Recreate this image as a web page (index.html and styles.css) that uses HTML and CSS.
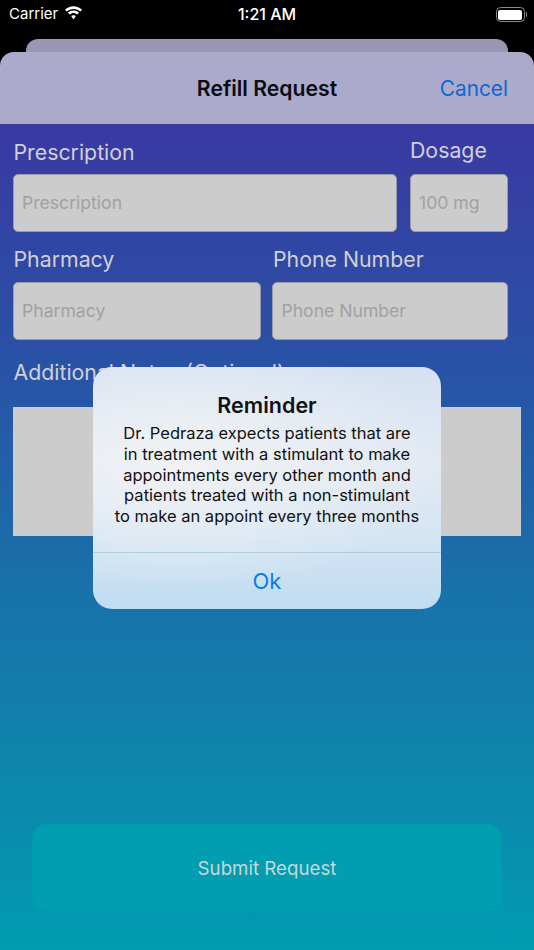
FILE: index.html
```html
<!DOCTYPE html>
<html lang="en">
<head>
<meta charset="utf-8">
<title>Refill Request</title>
<link rel="stylesheet" href="styles.css">
</head>
<body>
<div class="phone">
  <div class="status">
    <div class="status-left">
      <span>Carrier</span>
      <svg class="wifi" width="19" height="14" viewBox="0 0 19 14"><path d="M9.500 2.900c2.600 0 5 1 6.800 2.700l1.700-1.800C15.700 1.600 12.700.3 9.500.3S3.300 1.600 1 3.800l1.700 1.800c1.800-1.700 4.200-2.700 6.800-2.700z" fill="#fff"/><path d="M9.500 6.900c1.500 0 2.800.6 3.900 1.500l1.700-1.800c-1.500-1.400-3.500-2.200-5.600-2.200s-4.100.8-5.600 2.200l1.700 1.800c1.100-.9 2.400-1.500 3.900-1.500z" fill="#fff"/><path d="M9.500 9.200c-.9 0-1.700.3-2.300.9l2.300 3.500 2.300-3.500c-.6-.6-1.400-.9-2.300-.9z" fill="#fff"/></svg>
    </div>
    <div class="status-time">1:21 AM</div>
    <div class="status-right">
      <div class="battery"><div class="battery-fill"></div></div>
      <div class="battery-cap"></div>
    </div>
  </div>
  <div class="peek"></div>
  <div class="sheet">
    <header class="nav">
      <div class="nav-title">Refill Request</div>
      <div class="nav-cancel">Cancel</div>
    </header>
    <main class="form">
      <div class="row row-top">
        <div class="col col-wide">
          <div class="label label-low">Prescription</div>
          <div class="field">Prescription</div>
        </div>
        <div class="col col-dose">
          <div class="label label-high">Dosage</div>
          <div class="field">100 mg</div>
        </div>
      </div>
      <div class="row row-second">
        <div class="col col-pharm">
          <div class="label">Pharmacy</div>
          <div class="field">Pharmacy</div>
        </div>
        <div class="col col-phone">
          <div class="label">Phone Number</div>
          <div class="field">Phone Number</div>
        </div>
      </div>
      <div class="label label-notes">Additional Notes (Optional)</div>
      <div class="notes"></div>
      <div class="submit">Submit Request</div>
    </main>
  </div>
  <div class="alert">
    <div class="alert-body">
      <div class="alert-title">Reminder</div>
      <p class="alert-text">Dr. Pedraza expects patients that are<br>in treatment with a stimulant to make<br>appointments every other month and<br>patients treated with a non-stimulant<br>to make an appoint every three months</p>
    </div>
    <div class="alert-action">Ok</div>
  </div>
</div>
</body>
</html>
```

FILE: styles.css
```css
* { box-sizing: border-box; }
html, body { margin: 0; padding: 0; }
body { background: #000; font-family: Inter, "Liberation Sans", sans-serif; }
.phone { position: relative; width: 534px; height: 950px; display: flex; flex-direction: column; overflow: hidden; background: #000; }

.status { height: 39px; flex: none; position: relative; display: flex; justify-content: space-between; color: #fff; font-size: 15px; padding: 5px 7px 0 9px; }
.status-left { display: flex; align-items: flex-start; gap: 6px; line-height: 18px; }
.wifi { margin-top: 1px; }
.status-time { position: absolute; left: 0; right: 0; top: 5px; text-align: center; line-height: 18px; font-size: 16px; font-weight: 500; }
.status-right { display: flex; align-items: flex-start; gap: 1px; padding-top: 2px; }
.battery { width: 29px; height: 15px; border: 1.5px solid #8a8a8a; border-radius: 4.5px; padding: 1.5px; }
.battery-fill { height: 100%; background: #fff; border-radius: 2px; }
.battery-cap { width: 1.5px; height: 5px; margin-top: 5px; background: #8a8a8a; border-radius: 0 1px 1px 0; }

.peek { flex: none; height: 13px; margin: 0 26px; background: #9a97b5; border-radius: 12px 12px 0 0; }
.sheet { flex: 1; display: flex; flex-direction: column; border-radius: 14px 14px 0 0; overflow: hidden; }

.nav { height: 72px; flex: none; background: #abaaca; position: relative; display: flex; align-items: center; justify-content: flex-end; padding: 0 26px 0 0; }
.nav-title { position: absolute; left: 0; right: 0; text-align: center; font-size: 21.2px; font-weight: 600; color: #0b0b14; }
.nav-cancel { font-size: 20.8px; color: #0f67cf; }

.form { flex: 1; display: flex; flex-direction: column; padding: 0 26px 0 13px; background: linear-gradient(180deg, #3a39a2 0%, #2853a6 30%, #1a70aa 55%, #0a8cae 85%, #009cb0 100%); }
.row { display: flex; align-items: flex-end; }
.row-top { gap: 13px; margin-top: 11px; }
.row-second { gap: 11px; margin-top: 12px; }
.col { display: flex; flex-direction: column; }
.col-wide { width: 384px; }
.col-dose { width: 98px; }
.col-pharm { width: 249px; }
.col-phone { width: 236px; }
.label { font-size: 21.3px; line-height: 30px; color: #cfd0d8; margin-bottom: 8px; padding-left: 0.5px; }
.label-low { margin-bottom: 7px; }
.label-high { margin-bottom: 9px; padding-left: 0; }
.label-notes { margin-top: 17px; margin-bottom: 0; }
.field { height: 58px; background: #cccccc; border: 1px solid #9a9aa3; border-radius: 5px; padding: 0 8px 2px; display: flex; align-items: center; font-size: 17.6px; color: #a1a1a1; }
.notes { height: 129px; margin: 20px -13px 0 0; background: #cccccc; }
.submit { height: 87px; margin: 288px 6px 0 19px; padding-top: 2px; background: #009eb0; border-radius: 15px; display: flex; align-items: center; justify-content: center; font-size: 18.7px; color: #c9d6d9; }

.alert { position: absolute; left: 93px; top: 367px; width: 348px; height: 242px; border-radius: 19px; overflow: hidden; display: flex; flex-direction: column; background: radial-gradient(ellipse 260px 130px at 25% 38%, rgba(241, 243, 245, 0.95) 0%, rgba(241, 243, 245, 0) 100%), linear-gradient(180deg, #d5e1f2 0%, #e3eaf3 40%, #d5e5f3 70%, #bfdcf2 100%); }
.alert-body { height: 186px; flex: none; padding: 24px 0 0; text-align: center; color: #111; border-bottom: 1px solid #aecbdf; }
.alert-title { font-size: 21.5px; font-weight: 600; line-height: 28px; }
.alert-text { margin: 4px 0 0; font-size: 16.5px; line-height: 20.8px; white-space: nowrap; }
.alert-action { flex: 1; display: flex; align-items: center; justify-content: center; font-size: 22px; color: #0a7cf0; }
```
